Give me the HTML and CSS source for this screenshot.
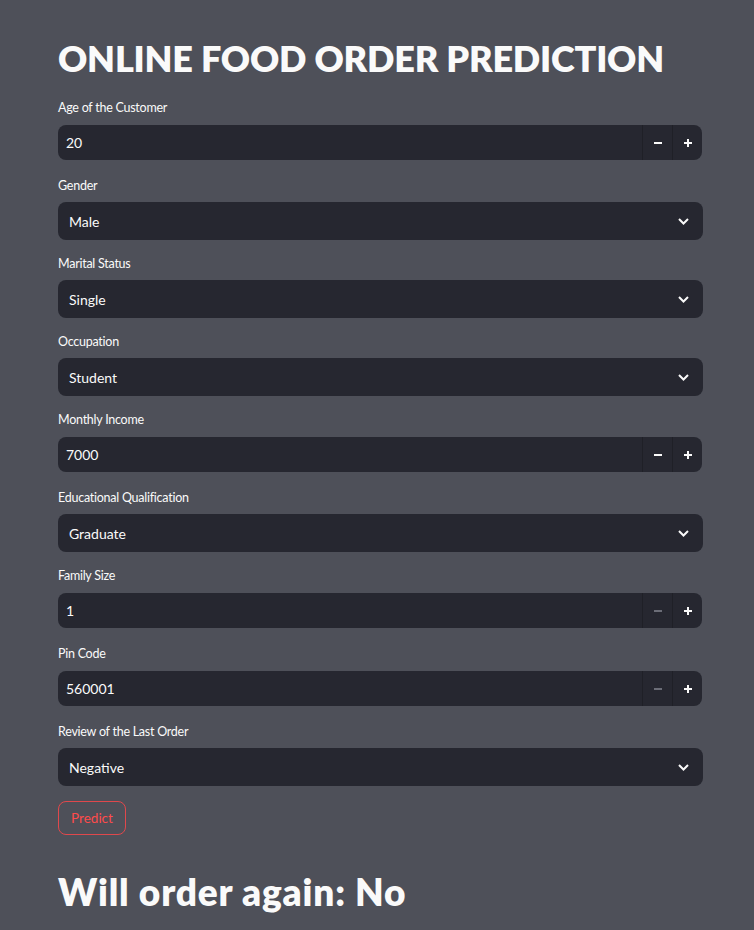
FILE: index.html
```html
<!DOCTYPE html>
<html lang="en">
<head>
<meta charset="utf-8">
<title>Online Food Order Prediction</title>
<link rel="stylesheet" href="styles.css">
</head>
<body>
<main class="app">
  <h1 class="title">ONLINE FOOD ORDER PREDICTION</h1>
  <div class="form">
    <div class="field field-number">
      <label class="label">Age of the Customer</label>
      <div class="number">
        <span class="value">20</span>
        <span class="step"><svg width="10" height="10" viewBox="0 0 10 10"><path d="M1 5h8" stroke="currentColor" stroke-width="2"/></svg></span>
        <span class="step"><svg width="10" height="10" viewBox="0 0 10 10"><path d="M1 5h8M5 1v8" stroke="currentColor" stroke-width="2"/></svg></span>
      </div>
    </div>
    <div class="field field-select">
      <label class="label">Gender</label>
      <div class="select"><span class="value">Male</span><svg class="chev" width="11" height="7" viewBox="0 0 11 7"><path d="M1 1l4.5 4.5L10 1" fill="none" stroke="currentColor" stroke-width="2"/></svg></div>
    </div>
    <div class="field field-select">
      <label class="label">Marital Status</label>
      <div class="select"><span class="value">Single</span><svg class="chev" width="11" height="7" viewBox="0 0 11 7"><path d="M1 1l4.5 4.5L10 1" fill="none" stroke="currentColor" stroke-width="2"/></svg></div>
    </div>
    <div class="field field-select">
      <label class="label">Occupation</label>
      <div class="select"><span class="value">Student</span><svg class="chev" width="11" height="7" viewBox="0 0 11 7"><path d="M1 1l4.5 4.5L10 1" fill="none" stroke="currentColor" stroke-width="2"/></svg></div>
    </div>
    <div class="field field-number">
      <label class="label">Monthly Income</label>
      <div class="number">
        <span class="value">7000</span>
        <span class="step"><svg width="10" height="10" viewBox="0 0 10 10"><path d="M1 5h8" stroke="currentColor" stroke-width="2"/></svg></span>
        <span class="step"><svg width="10" height="10" viewBox="0 0 10 10"><path d="M1 5h8M5 1v8" stroke="currentColor" stroke-width="2"/></svg></span>
      </div>
    </div>
    <div class="field field-select">
      <label class="label">Educational Qualification</label>
      <div class="select"><span class="value">Graduate</span><svg class="chev" width="11" height="7" viewBox="0 0 11 7"><path d="M1 1l4.5 4.5L10 1" fill="none" stroke="currentColor" stroke-width="2"/></svg></div>
    </div>
    <div class="field field-number">
      <label class="label">Family Size</label>
      <div class="number">
        <span class="value">1</span>
        <span class="step step-disabled"><svg width="10" height="10" viewBox="0 0 10 10"><path d="M1 5h8" stroke="currentColor" stroke-width="2"/></svg></span>
        <span class="step"><svg width="10" height="10" viewBox="0 0 10 10"><path d="M1 5h8M5 1v8" stroke="currentColor" stroke-width="2"/></svg></span>
      </div>
    </div>
    <div class="field field-number">
      <label class="label">Pin Code</label>
      <div class="number">
        <span class="value">560001</span>
        <span class="step step-disabled"><svg width="10" height="10" viewBox="0 0 10 10"><path d="M1 5h8" stroke="currentColor" stroke-width="2"/></svg></span>
        <span class="step"><svg width="10" height="10" viewBox="0 0 10 10"><path d="M1 5h8M5 1v8" stroke="currentColor" stroke-width="2"/></svg></span>
      </div>
    </div>
    <div class="field field-select">
      <label class="label">Review of the Last Order</label>
      <div class="select"><span class="value">Negative</span><svg class="chev" width="11" height="7" viewBox="0 0 11 7"><path d="M1 1l4.5 4.5L10 1" fill="none" stroke="currentColor" stroke-width="2"/></svg></div>
    </div>
  </div>
  <button class="predict">Predict</button>
  <h2 class="result">Will order again: No</h2>
</main>
</body>
</html>
```
FILE: styles.css
```css
html, body {
  margin: 0;
  padding: 0;
  background: #4e5059;
}
body {
  font-family: Lato, "Open Sans", sans-serif;
  color: #fafafa;
}
.app {
  width: 645px;
  padding: 37px 0 0 58px;
  display: flex;
  flex-direction: column;
  align-items: flex-start;
}
.title {
  margin: 0;
  font-size: 36px;
  letter-spacing: -0.2px;
  line-height: 1.2;
  font-weight: 800;
  color: #fafafa;
}
.form {
  margin-top: 19px;
  width: 100%;
  display: flex;
  flex-direction: column;
}
.field {
  display: flex;
  flex-direction: column;
}
.field-number {
  padding-bottom: 17px;
}
.field-select {
  padding-bottom: 15px;
}
.label {
  padding-top: 1px;
  font-size: 12.5px;
  letter-spacing: -0.25px;
  line-height: 16px;
  color: #fafafa;
}
.field-number .label {
  margin-bottom: 9px;
}
.field-select .label {
  margin-bottom: 8px;
}
.number {
  height: 35px;
  width: 644px;
  background: #262730;
  border-radius: 8px;
  display: flex;
  align-items: stretch;
  overflow: hidden;
}
.value {
  flex: 1;
  display: flex;
  align-items: center;
  font-size: 14px;
  color: #fafafa;
}
.number .value {
  padding-left: 8px;
}
.step {
  width: 29px;
  display: flex;
  align-items: center;
  justify-content: center;
  border-left: 1px solid #1f2027;
  color: #fafafa;
}
.step-disabled {
  color: #6b6d77;
}
.select {
  height: 38px;
  background: #262730;
  border-radius: 8px;
  display: flex;
  align-items: center;
  padding: 0 14px 0 11px;
}
.chev {
  color: #fafafa;
}
.predict {
  height: 34px;
  width: 68px;
  padding: 0;
  background: transparent;
  border: 1px solid #e0484c;
  border-radius: 8px;
  color: #ff4b4b;
  font-family: Lato, "Open Sans", sans-serif;
  font-size: 13.5px;
}
.result {
  margin: 35px 0 0;
  font-size: 37px;
  letter-spacing: 0.8px;
  line-height: 1.2;
  font-weight: 800;
  color: #fafafa;
}
```
